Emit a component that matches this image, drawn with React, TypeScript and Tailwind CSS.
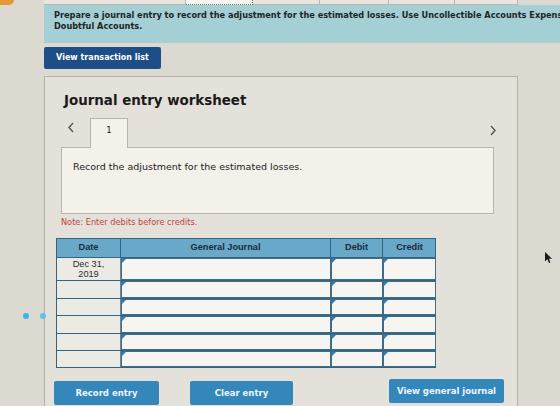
import { ReactNode } from 'react'

const verdana = { fontFamily: '"DejaVu Sans", Verdana, sans-serif' }
const arial = { fontFamily: '"Liberation Sans", Arial, sans-serif' }

export default function App() {
  return (
    <div className="relative w-[560px] h-[406px] overflow-hidden bg-[#dcd9d1]" style={verdana}>
      {/* strip of the previous table, mostly scrolled away */}
      <div className="flex h-[5px] pl-[44px]">
        <div className="w-[142px] border-r border-b border-[#b9b7b0] bg-[#e8e6df]" />
        <div className="w-[67px] border-r border-b border-dotted border-[#6f6f6f] bg-[#f6f5f1]" />
        <div className="w-[67px] border-r border-b border-[#b9b7b0] bg-[#e8e6df]" />
        <div className="w-[69px] border-r border-b border-[#b9b7b0] bg-[#e8e6df]" />
        <div className="w-[66px] border-r border-b border-[#b9b7b0] bg-[#e8e6df]" />
        <div className="w-[63px] border-r border-b border-[#b9b7b0] bg-[#e8e6df]" />
      </div>
      <div className="absolute left-0 top-0 w-[14px] h-[5px] rounded-br-md bg-[#e39a3a]" />

      {/* instructions */}
      <div className="ml-[44px] w-[600px] h-[38px] bg-[#a4cfd5] pl-[10px] pt-[5px] text-[8.2px] leading-[11px] font-bold text-[#1e2526]">
        <p className="whitespace-nowrap">
          Prepare a journal entry to record the adjustment for the estimated losses. Use Uncollectible Accounts Expense
        </p>
        <p>Doubtful Accounts.</p>
      </div>

      <button className="ml-[44px] mt-[4px] w-[117px] h-[22px] rounded-[2px] bg-[#1d4e87] text-[8px] font-bold text-white">
        View transaction list
      </button>

      {/* worksheet panel */}
      <div className="ml-[44px] mt-[7px] w-[474px] h-[340px] border border-[#b3b1a9] bg-[#e3e1d9] pl-[16px] pr-[24px]">
        <h2 className="pt-[15px] pl-[3px] text-[13.4px] leading-[18px] font-bold text-[#1a1a1a]">
          Journal entry worksheet
        </h2>

        <div className="mt-[7px] flex items-end justify-between">
          <div className="flex items-end">
            <div className="w-[29px] h-[30px] flex items-center justify-start pl-[6px] pb-[10px]">
              <Chevron dir="left" />
            </div>
            <div className="relative z-10 -mb-px w-[38px] h-[30px] border border-b-0 border-[#b7b5ad] bg-[#f3f1ea] flex justify-center pt-[5px] text-[8.5px] text-[#222]">
              1
            </div>
          </div>
          <div className="pb-[11px] -mr-[4px]">
            <Chevron dir="right" />
          </div>
        </div>
        <div className="w-[433px] h-[67px] border border-[#b7b5ad] bg-[#f3f1ea] pl-[11px] pt-[12px] text-[9.5px] text-[#222]">
          Record the adjustment for the estimated losses.
        </div>

        <p className="mt-[3px] text-[8.2px] leading-[10px] text-[#c8403a]">Note: Enter debits before credits.</p>

        <JournalTable />

        <div className="mt-[13px] flex items-start" style={verdana}>
          <ActionButton w="w-[105px]" ml="-ml-[7px]">Record entry</ActionButton>
          <ActionButton w="w-[103px]" ml="ml-[31px]">Clear entry</ActionButton>
          <ActionButton w="w-[115px]" ml="ml-[96px] -mt-[2px]">View general journal</ActionButton>
        </div>
      </div>

      {/* carousel dots floating at the left edge */}
      <div className="absolute left-[23px] top-[313px] w-[6px] h-[6px] rounded-full bg-[#38b4f2]" />
      <div className="absolute left-[40px] top-[313px] w-[6px] h-[6px] rounded-full bg-[#5cc3f0]" />

      {/* mouse pointer */}
      <svg className="absolute left-[544px] top-[251px]" width="9" height="13" viewBox="0 0 9 13">
        <path d="M1 1 L1 10.5 L3.4 8.3 L5 12 L6.4 11.4 L4.9 7.8 L8 7.8 Z" fill="#1a1a1a" />
      </svg>
    </div>
  )
}

function Chevron({ dir }: { dir: 'left' | 'right' }) {
  const pts = dir === 'left' ? '6,1 2,5.5 6,10' : '2,1 6,5.5 2,10'
  return (
    <svg width="8" height="11" viewBox="0 0 8 11">
      <polyline points={pts} fill="none" stroke="#555" strokeWidth="1.4" />
    </svg>
  )
}

function ActionButton({ children, w, ml }: { children: ReactNode; w: string; ml: string }) {
  return (
    <button className={`${w} ${ml} shrink-0 h-[24px] rounded-[2px] bg-[#3387bb] text-[8.5px] font-bold text-[#eef6fb]`}>
      {children}
    </button>
  )
}

const cols = 'grid grid-cols-[64px_210px_52px_53px]'

function InputCell() {
  return (
    <div className="relative border border-[#3e6d89] bg-[#f6f5f1]">
      <span className="absolute left-0 top-0 w-0 h-0 border-t-[4px] border-r-[4px] border-t-[#2f7fc0] border-r-transparent" />
    </div>
  )
}

function JournalTable() {
  // heights include the 1px top rule of each row
  const rows = [
    { h: 'h-[23px]', date: ['Dec 31,', '2019'] },
    { h: 'h-[18px]', date: [] },
    { h: 'h-[17px]', date: [] },
    { h: 'h-[18px]', date: [] },
    { h: 'h-[17px]', date: [] },
    { h: 'h-[17px]', date: [] },
  ]
  return (
    <div className="mt-[11px] ml-[-5px] w-[380px] border border-[#35647f]" style={arial}>
      <div className={`${cols} h-[18px] bg-[#69a8c9] text-[9.2px] font-bold text-[#1c2c38]`}>
        <div className="flex items-center justify-center border-r border-[#35647f]">Date</div>
        <div className="flex items-center justify-center border-r border-[#35647f]">General Journal</div>
        <div className="flex items-center justify-center border-r border-[#35647f]">Debit</div>
        <div className="flex items-center justify-center">Credit</div>
      </div>
      {rows.map((r, i) => (
        <div key={i} className={`${cols} ${r.h} border-t border-[#35647f]`}>
          <div className="flex flex-col items-center pt-[1px] border-r border-[#6d8797] bg-[#eceae4] text-[9.2px] leading-[10px] text-[#2a2a2a]">
            {r.date.map((d) => (
              <span key={d}>{d}</span>
            ))}
          </div>
          <InputCell />
          <InputCell />
          <InputCell />
        </div>
      ))}
    </div>
  )
}
